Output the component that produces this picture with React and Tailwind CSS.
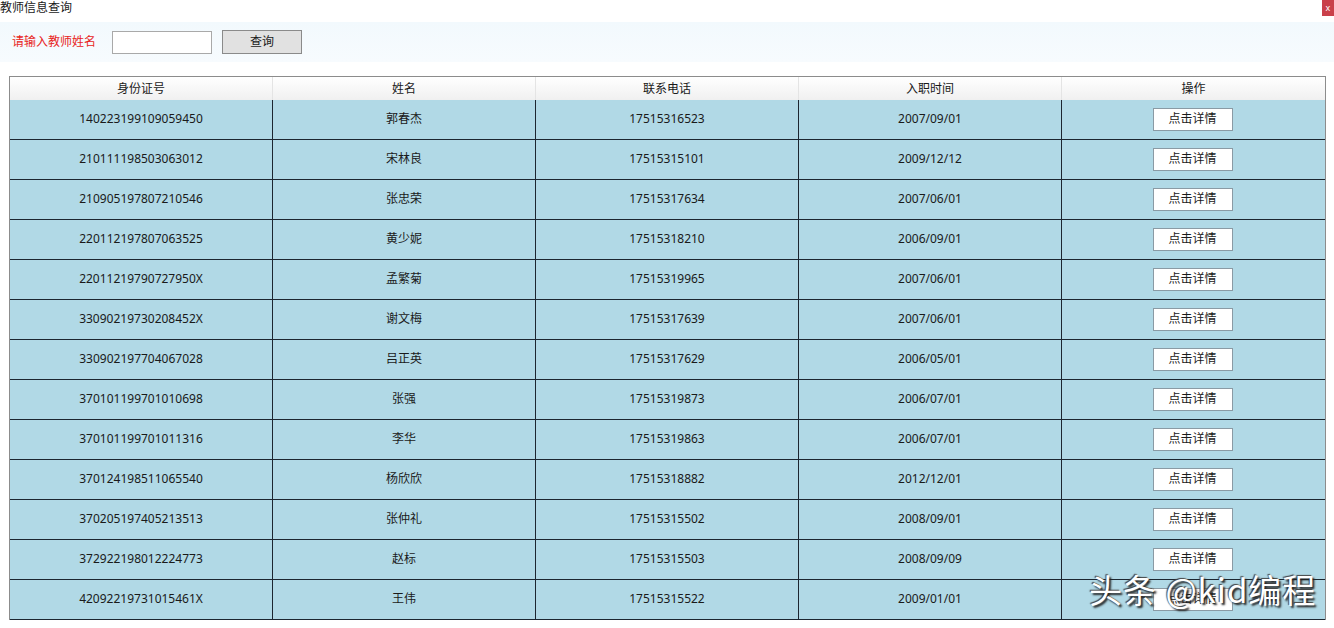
import React from 'react';

const teachers = [
  ['140223199109059450', '郭春杰', '17515316523', '2007/09/01'],
  ['210111198503063012', '宋林良', '17515315101', '2009/12/12'],
  ['210905197807210546', '张忠荣', '17515317634', '2007/06/01'],
  ['220112197807063525', '黄少妮', '17515318210', '2006/09/01'],
  ['22011219790727950X', '孟繁菊', '17515319965', '2007/06/01'],
  ['33090219730208452X', '谢文梅', '17515317639', '2007/06/01'],
  ['330902197704067028', '吕正英', '17515317629', '2006/05/01'],
  ['370101199701010698', '张强', '17515319873', '2006/07/01'],
  ['370101199701011316', '李华', '17515319863', '2006/07/01'],
  ['370124198511065540', '杨欣欣', '17515318882', '2012/12/01'],
  ['370205197405213513', '张仲礼', '17515315502', '2008/09/01'],
  ['372922198012224773', '赵标', '17515315503', '2008/09/09'],
  ['42092219731015461X', '王伟', '17515315522', '2009/01/01'],
];

const font = { fontFamily: '"Noto Sans", "Noto Sans CJK SC", sans-serif' };

export default function App() {
  return (
    <div className="relative w-[1334px] h-[628px] bg-white overflow-hidden text-[12px] text-[#1a1a1a]" style={font}>
      {/* title bar */}
      <div className="flex items-start justify-between h-[22px]">
        <span className="leading-[16px]">教师信息查询</span>
        <span className="w-[12px] h-[16px] bg-[#c9404a] text-white text-[9px] leading-[16px] text-center">x</span>
      </div>

      {/* search bar */}
      <div className="flex items-center h-[40px] bg-gradient-to-b from-[#f2f9fd] to-[#f7fbfe] pl-[12px]">
        <span className="text-[#e8241c] w-[100px]">请输入教师姓名</span>
        <input className="w-[100px] h-[23px] bg-white border border-[#a9a9a9] outline-none" />
        <button className="ml-[10px] w-[80px] h-[24px] bg-[#e1e1e1] border border-[#8a8a8a] leading-none">查询</button>
      </div>

      {/* table */}
      <div className="mt-[14px] ml-[9px] w-[1317px] border-t border-l border-r border-[#8c8c8c]">
        <div className="grid grid-cols-[263px_263px_263px_263px_1fr] h-[23px] bg-gradient-to-b from-white to-[#f0f0f0]">
          {['身份证号', '姓名', '联系电话', '入职时间', '操作'].map((h, i) => (
            <div key={h} className={`flex items-center justify-center ${i < 4 ? 'border-r border-[#e4e4e4]' : ''}`}>
              {h}
            </div>
          ))}
        </div>
        {teachers.map((t) => (
          <div key={t[0]} className="grid grid-cols-[263px_263px_263px_263px_1fr] h-[40px] bg-[#b1d9e6] border-b border-[#1c2630]">
            {t.map((c, i) => (
              <div key={i} className="flex items-center justify-center pb-[1px] border-r border-[#1c2630]">
                {c}
              </div>
            ))}
            <div className="flex items-center justify-center pr-[2px] pb-[1px]">
              <button className="w-[80px] h-[23px] bg-white border border-[#8a9aa4] leading-none">点击详情</button>
            </div>
          </div>
        ))}
      </div>

      {/* watermark */}
      <div
        className="absolute left-[1089px] top-[569px] text-[33px] leading-[40px] text-white tracking-[1px]"
        style={{ textShadow: '2px 2px 2px #222, -1px -1px 1px #444', fontFamily: '"Noto Sans CJK SC", sans-serif' }}
      >
        头条 @kid编程
      </div>
    </div>
  );
}
